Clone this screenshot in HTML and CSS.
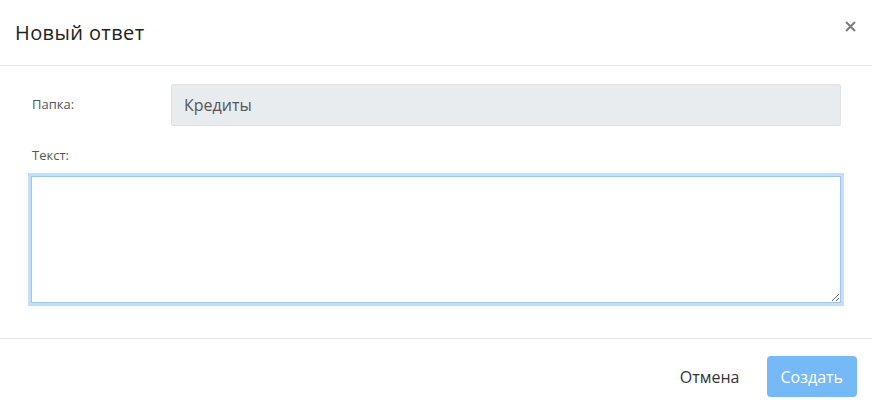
FILE: index.html
```html
<!DOCTYPE html>
<html lang="ru">
<head>
<meta charset="utf-8">
<link rel="stylesheet" href="styles.css">
</head>
<body>
<div class="modal">
  <div class="modal-header">
    <h5 class="modal-title">Новый ответ</h5>
    <button class="close" type="button" aria-label="Закрыть">
      <svg width="11" height="11" viewBox="0 0 11 11"><path d="M1 1 L10 10 M10 1 L1 10" stroke="#7b7b7b" stroke-width="2" fill="none"/></svg>
    </button>
  </div>
  <div class="modal-body">
    <div class="row">
      <label class="row-label">Папка:</label>
      <div class="input readonly">Кредиты</div>
    </div>
    <label class="block-label">Текст:</label>
    <textarea class="textarea"></textarea>
  </div>
  <div class="modal-footer">
    <button class="btn btn-link" type="button">Отмена</button>
    <button class="btn btn-primary" type="button">Создать</button>
  </div>
</div>
</body>
</html>
```
FILE: styles.css
```css
* { box-sizing: border-box; }
html, body { margin: 0; padding: 0; background: #fff; }
body {
  font-family: "Open Sans", "Noto Sans", sans-serif;
  color: #212529;
  width: 872px;
  height: 413px;
  overflow: hidden;
}
.modal { display: flex; flex-direction: column; }
.modal-header {
  height: 66px;
  display: flex;
  align-items: center;
  justify-content: space-between;
  padding: 0 16px 0 15px;
  border-bottom: 1px solid #e5e5e5;
}
.modal-title {
  margin: 0;
  font-size: 20px;
  font-weight: 500;
  color: #222;
  letter-spacing: 0.4px;
}
.close {
  border: 0;
  background: none;
  padding: 0;
  width: 11px;
  height: 11px;
  display: flex;
  margin-bottom: 12px;
}
.modal-body {
  padding: 18px 31px 35px 31px;
  display: flex;
  flex-direction: column;
}
.row { display: flex; align-items: center; }
.row-label {
  width: 140px;
  font-size: 13px;
  color: #555;
  padding-left: 1px;
  margin-bottom: 2px;
}
.input {
  flex: 1;
  height: 42px;
  display: flex;
  align-items: center;
  padding: 0 12px;
  font-size: 16px;
  color: #555;
  background: #e9ecef;
  border: 1px solid #dfe3e7;
  border-radius: 2px;
}
.block-label {
  font-size: 13px;
  color: #555;
  margin-top: 19px;
  padding-left: 1px;
  line-height: 20px;
}
.textarea {
  margin-top: 11px;
  height: 127px;
  width: 100%;
  border: 1px solid #9fc4ea;
  border-radius: 0;
  box-shadow: 0 0 0 3px #c2dffc;
  outline: none;
  resize: vertical;
  font-family: inherit;
  background: #fff;
}
.modal-footer {
  border-top: 1px solid #e5e5e5;
  display: flex;
  justify-content: flex-end;
  align-items: center;
  padding: 17px 15px 16px;
  gap: 15px;
}
.btn {
  font-family: inherit;
  font-size: 16px;
  height: 41px;
  border-radius: 4px;
  border: 0;
  cursor: pointer;
}
.btn-link {
  background: none;
  color: #333;
  padding: 0 12px;
}
.btn-primary {
  background: #75b9f7;
  color: #fff;
  padding: 0 14px;
}
```
